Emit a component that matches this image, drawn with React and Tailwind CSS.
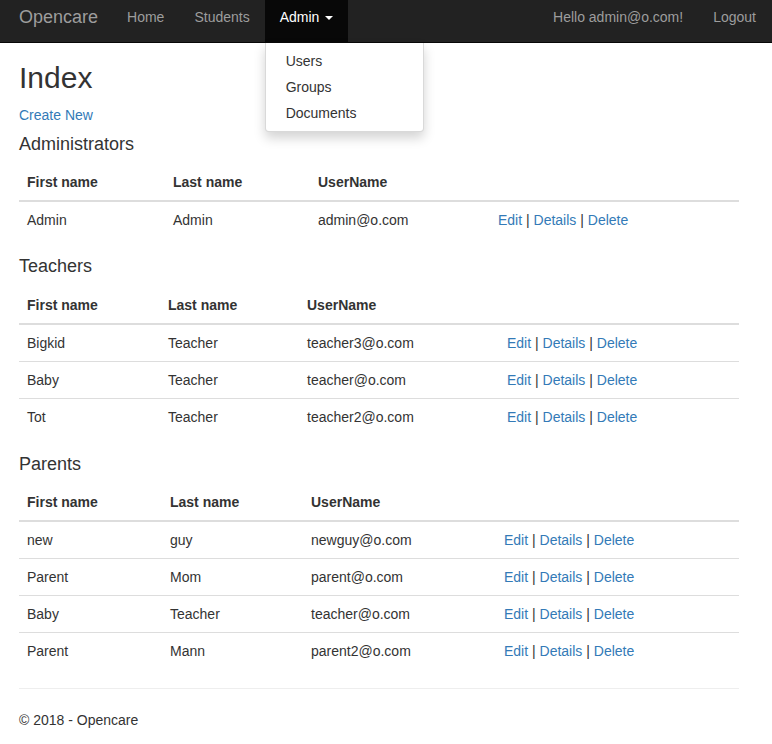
import React from "react";

const administrators = [{ first: "Admin", last: "Admin", user: "admin@o.com" }];

const teachers = [
  { first: "Bigkid", last: "Teacher", user: "teacher3@o.com" },
  { first: "Baby", last: "Teacher", user: "teacher@o.com" },
  { first: "Tot", last: "Teacher", user: "teacher2@o.com" },
];

const parents = [
  { first: "new", last: "guy", user: "newguy@o.com" },
  { first: "Parent", last: "Mom", user: "parent@o.com" },
  { first: "Baby", last: "Teacher", user: "teacher@o.com" },
  { first: "Parent", last: "Mann", user: "parent2@o.com" },
];

const UserTable = ({ rows, widths }) => {
  return (
    <table className="w-full mb-0">
      <thead>
        <tr>
          <th className={`${widths[0]} text-left font-bold px-2 py-2 leading-5 border-b-2 border-[#ddd]`}>First name</th>
          <th className={`${widths[1]} text-left font-bold px-2 py-2 leading-5 border-b-2 border-[#ddd]`}>Last name</th>
          <th className={`${widths[2]} text-left font-bold px-2 py-2 leading-5 border-b-2 border-[#ddd]`}>UserName</th>
          <th className="border-b-2 border-[#ddd]"></th>
        </tr>
      </thead>
      <tbody>
        {rows.map((r, i) => (
          <tr key={i}>
            <td className="px-2 py-2 leading-5 border-t border-[#ddd]">{r.first}</td>
            <td className="px-2 py-2 leading-5 border-t border-[#ddd]">{r.last}</td>
            <td className="px-2 py-2 leading-5 border-t border-[#ddd]">{r.user}</td>
            <td className="px-2 py-2 leading-5 border-t border-[#ddd]">
              <a href="#" className="text-[#337ab7]">Edit</a> |{" "}
              <a href="#" className="text-[#337ab7]">Details</a> |{" "}
              <a href="#" className="text-[#337ab7]">Delete</a>
            </td>
          </tr>
        ))}
      </tbody>
    </table>
  );
};

export default function App() {
  return (
    <div
      className="min-h-[744px] bg-white text-[14px] leading-5 text-[#333]"
      style={{ fontFamily: '"Liberation Sans", Arial, sans-serif' }}
    >
      {/* Navbar */}
      <nav className="h-[43px] bg-[#222] border-b border-[#080808] flex justify-between relative z-10">
        <div className="flex">
          <a href="#" className="pl-[19px] pr-[14px] text-[18px] leading-5 pt-[7px] text-[#9d9d9d]">Opencare</a>
          <a href="#" className="px-[15px] pt-[7px] text-[#9d9d9d]">Home</a>
          <a href="#" className="px-[15px] pt-[7px] text-[#9d9d9d]">Students</a>
          <div className="relative">
            <a href="#" className="flex items-start h-[42px] px-[15px] pt-[7px] bg-[#080808] text-white">
              Admin
              <span className="ml-[6px] mt-[9px] w-0 h-0 border-x-[4px] border-x-transparent border-t-[4px] border-t-white"></span>
            </a>
            <div className="absolute left-0 top-[43px] w-[159px] bg-white border border-black/15 border-t-0 rounded-b py-[5px] shadow-[0_6px_12px_rgba(0,0,0,0.175)]">
              <a href="#" className="block px-5 py-[3px] text-[#333]">Users</a>
              <a href="#" className="block px-5 py-[3px] text-[#333]">Groups</a>
              <a href="#" className="block px-5 py-[3px] text-[#333]">Documents</a>
            </div>
          </div>
        </div>
        <div className="flex pr-[1px]">
          <a href="#" className="px-[15px] pt-[7px] text-[#9d9d9d]">Hello admin@o.com!</a>
          <a href="#" className="px-[15px] pt-[7px] text-[#9d9d9d]">Logout</a>
        </div>
      </nav>

      {/* Body */}
      <div className="w-[720px] ml-[19px]">
        <h1 className="text-[30px] leading-[33px] mt-[18px] mb-[11px] font-normal">Index</h1>
        <p>
          <a href="#" className="text-[#337ab7]">Create New</a>
        </p>

        <h4 className="text-[18px] leading-5 mt-[9px] mb-[10px]">Administrators</h4>
        <UserTable rows={administrators} widths={["w-[146px]", "w-[145px]", "w-[180px]"]} />

        <h4 className="text-[18px] leading-5 mt-[18px] mb-[11px]">Teachers</h4>
        <UserTable rows={teachers} widths={["w-[141px]", "w-[139px]", "w-[200px]"]} />

        <h4 className="text-[18px] leading-5 mt-[19px] mb-[10px]">Parents</h4>
        <UserTable rows={parents} widths={["w-[143px]", "w-[141px]", "w-[193px]"]} />

        <hr className="mt-[19px] border-t border-[#eee]" />
        <footer className="pt-[21px]">
          <p>© 2018 - Opencare</p>
        </footer>
      </div>
    </div>
  );
}
